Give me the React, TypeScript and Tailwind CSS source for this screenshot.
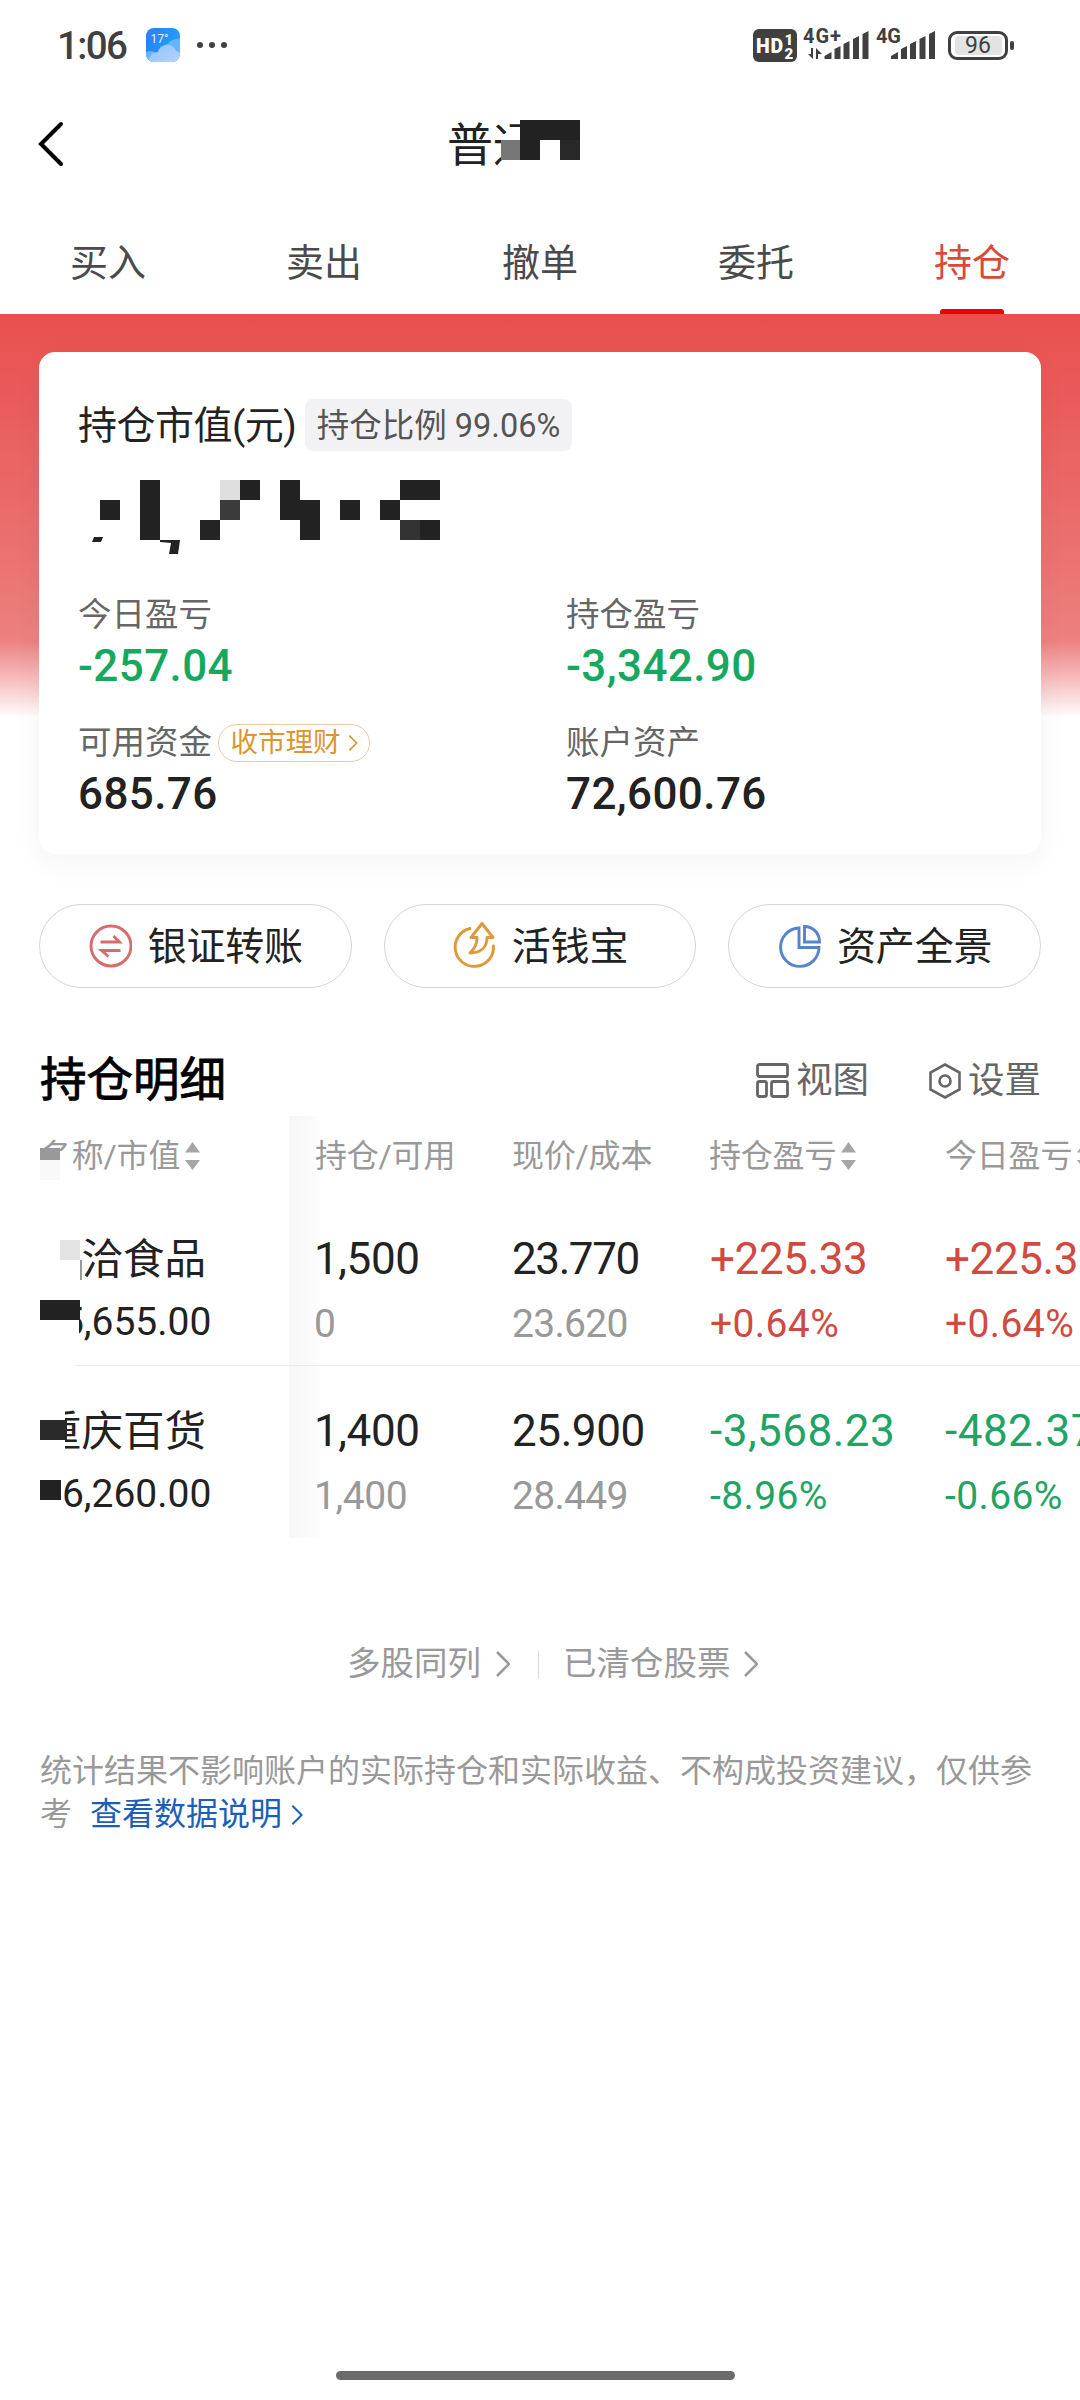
import type { ReactNode } from 'react'
import clsx from 'clsx'

const tabs = ['买入', '卖出', '撤单', '委托', '持仓']

const holdings = [
  {
    name: '洽洽食品',
    value: '35,655.00',
    amount: '1,500',
    available: '0',
    price: '23.770',
    cost: '23.620',
    profit: '+225.33',
    profitRate: '+0.64%',
    today: '+225.33',
    todayRate: '+0.64%',
    up: true
  },
  {
    name: '重庆百货',
    value: '36,260.00',
    amount: '1,400',
    available: '1,400',
    price: '25.900',
    cost: '28.449',
    profit: '-3,568.23',
    profitRate: '-8.96%',
    today: '-482.37',
    todayRate: '-0.66%',
    up: false
  }
]

// Masking blocks drawn over private values: [x, y, width, height, color]
type Block = [number, number, number, number, string]

const titleMask: Block[] = [
  [54, 14, 80, 32, '#ffffff'],
  [61, 8, 20, 14, '#ffffff'],
  [52, 20, 20, 20, '#777777'],
  [71, 0, 60, 20, '#222222'],
  [71, 20, 20, 20, '#222222'],
  [111, 20, 20, 20, '#282828']
]

const balanceMask: Block[] = [
  [20, 20, 20, 20, '#222222'],
  [60, 0, 20, 60, '#222222'],
  [140, 0, 20, 20, '#dfdfdf'],
  [160, 0, 20, 20, '#222222'],
  [140, 20, 20, 20, '#3b3b3b'],
  [120, 40, 20, 20, '#242424'],
  [200, 0, 20, 40, '#222222'],
  [220, 20, 20, 40, '#222222'],
  [260, 20, 20, 20, '#222222'],
  [300, 20, 20, 20, '#222222'],
  [320, 0, 40, 20, '#222222'],
  [320, 40, 20, 20, '#333333'],
  [340, 40, 20, 20, '#222222']
]

const headMask: Block[] = [
  [0, 12, 29, 30, '#ffffff'],
  [0, 9, 20, 12, '#999999'],
  [0, 21, 20, 20, '#f9f9f9']
]

const rowMasks: Block[][] = [
  [
    [-2, 0, 44, 62, '#ffffff'],
    [20, 12, 20, 20, '#e4e4e4'],
    [40, 32, 2, 20, '#999999'],
    [-2, 70, 41, 50, '#ffffff'],
    [0, 72, 40, 20, '#222222']
  ],
  [
    [-2, 0, 27, 62, '#ffffff'],
    [0, 20, 27, 20, '#2a2a2a'],
    [-2, 70, 23, 50, '#ffffff'],
    [0, 80, 21, 20, '#222222']
  ]
]

function Mask({ blocks, className }: { blocks: Block[]; className?: string }) {
  return (
    <svg
      className={clsx('pointer-events-none absolute overflow-visible', className)}
      width="1"
      height="1"
      shapeRendering="crispEdges"
    >
      {blocks.map(([x, y, w, h, fill], i) => (
        <rect key={i} x={x} y={y} width={w} height={h} fill={fill} />
      ))}
    </svg>
  )
}

function Chevron({ className }: { className?: string }) {
  return (
    <svg className={className} viewBox="0 0 14 26" fill="none" stroke="currentColor" strokeWidth="2.6">
      <path d="M1 1l12 12L1 25" />
    </svg>
  )
}

function SortIcon() {
  return (
    <svg className="ml-[5px] h-7 w-[15px] shrink-0" viewBox="0 0 15 28" fill="#a6a6a6">
      <path d="M7.500 0L15 10.500H0zM7.500 28L15 18H0z" />
    </svg>
  )
}

function Signal({ label, data }: { label: string; data?: boolean }) {
  return (
    <svg className="h-[34px] w-[66px] overflow-visible" viewBox="0 0 66 34" fill="#404040">
      <text x="0" y="16" fontFamily="Roboto, sans-serif" fontSize="20" fontWeight="700" textLength={data ? 38 : 25}>
        {label}
      </text>
      {data && <path d="M10 21v11l-5-5h3v-6zM13 32V21l6 6h-4v5z" />}
      <g transform={data ? 'translate(21.5 0)' : 'translate(15 0)'}>
        <path d="M0 32v-3l7-4v7zM10 32V22l6-3v13zM19 32V17l6-3v18zM28.500 32V12l6-3v23zM38 32V7l6-3v28z" />
      </g>
    </svg>
  )
}

function StatusBar() {
  return (
    <div className="flex h-[90px] items-center pl-[57px] pr-[66px] text-[#404040]">
      <span className="w-[89px] pt-[3px] text-[38.500px] font-medium leading-none tracking-[-1.600px]">1:06</span>
      <svg className="h-[34px] w-[34px]" viewBox="0 0 34 34">
        <defs>
          <linearGradient id="sky" x1="0" y1="0" x2="1" y2="0.4">
            <stop offset="0" stopColor="#2f7cf6" />
            <stop offset="1" stopColor="#1ba2fb" />
          </linearGradient>
          <linearGradient id="cloud" x1="0" y1="0" x2="1" y2="1">
            <stop offset="0" stopColor="#8cc4fb" />
            <stop offset="1" stopColor="#b9d3fb" />
          </linearGradient>
          <clipPath id="tile">
            <rect width="34" height="34" rx="8" />
          </clipPath>
        </defs>
        <g clipPath="url(#tile)">
          <rect width="34" height="34" fill="url(#sky)" />
          <path d="M18 18c4-1 5-5 9-6l7-2v16H18z" fill="#63b6fb" />
          <path d="M0 24c4-2 7-1 10 1l4 9H0z" fill="#69b4fa" />
          <path d="M3 34c0-6 4-10 9-10 2-9 15-10 18-1 2 0 4 2 4 3v8z" fill="url(#cloud)" />
          <text x="4.500" y="15" fill="#e6f3ff" fontFamily="Roboto, sans-serif" fontSize="12">17°</text>
        </g>
      </svg>
      <div className="ml-[17px] flex gap-1.5">
        <i className="size-1.5 rounded-full bg-[#404040]" />
        <i className="size-1.5 rounded-full bg-[#404040]" />
        <i className="size-1.5 rounded-full bg-[#404040]" />
      </div>
      <div className="ml-auto flex items-center">
        <svg className="h-[33px] w-11" viewBox="0 0 44 33" fontFamily="Roboto, sans-serif" fontWeight="900" fill="#fff">
          <rect width="44" height="33" rx="6" fill="#404040" />
          <text x="3" y="23.500" fontSize="19.500" textLength="27">HD</text>
          <text x="31.500" y="15.500" fontSize="15">1</text>
          <text x="31.500" y="29.500" fontSize="15">2</text>
        </svg>
        <div className="ml-[6px] flex gap-[7px] pb-0.5">
          <Signal label="4G+" data />
          <Signal label="4G" />
        </div>
        <div className="ml-[6px] flex h-[29px] w-[60px] items-center justify-center rounded-[9px] border-[3px] border-[#404040]">
          <div className="flex h-[19px] w-[47px] items-center justify-center rounded-[4px] bg-[#e3e3e3] text-[23px] leading-none">
            96
          </div>
        </div>
        <i className="ml-0.5 h-[9px] w-[4px] rounded-[2px] bg-[#404040]" />
      </div>
    </div>
  )
}

function Stat({ label, value, green, extra }: { label: string; value: string; green?: boolean; extra?: ReactNode }) {
  return (
    <div className="h-32">
      <div className="flex h-[50px] items-center text-[33.500px] leading-none text-[#666666]">
        {label}
        {extra}
      </div>
      <div
        className={clsx(
          'flex h-[51px] items-center text-[44px] font-medium leading-none tracking-[0.400px]',
          green ? 'text-[#17a85f]' : 'text-[#222222]'
        )}
      >
        {value}
      </div>
    </div>
  )
}

function Pill({ icon, label }: { icon: ReactNode; label: string }) {
  return (
    <button className="flex h-[84px] items-center justify-center gap-[16px] rounded-full border border-[#d4d6d8] text-[39px] leading-none tracking-[-0.200px] text-[#222222]">
      {icon}
      <span className="pt-[2px]">{label}</span>
    </button>
  )
}

function TransferIcon() {
  return (
    <svg className="size-[44px]" viewBox="0 0 44 44" fill="none" stroke="#d66c6b" strokeWidth="2.900">
      <circle cx="23" cy="22" r="20" />
      <path d="M12.500 18h19l-6-6M32.500 26.500h-19l7 6" />
    </svg>
  )
}

function CashIcon() {
  return (
    <svg className="size-[44px] overflow-visible" viewBox="0 0 44 44" fill="none" stroke="#e0993a" strokeWidth="2.900" strokeLinejoin="round">
      <path d="M18 4.500A19.200 19.200 0 1 0 41.500 22" strokeLinecap="round" />
      <path d="M30 -0.500L19 13.500h6c0 7-2 10-7 15.500 11 0 17-6 17-15.500h6z" />
    </svg>
  )
}

function PieIcon() {
  return (
    <svg className="size-[44px]" viewBox="0 0 44 44" fill="none" stroke="#5583cc" strokeWidth="2.900">
      <path d="M22 4a19.200 19.200 0 1 0 20 19.500H22z" />
      <path d="M27.500 2.500v15.500h15C42.500 9 36 2.500 27.500 2.500z" />
    </svg>
  )
}

function Cell({ top, bottom, className, bottomClass }: { top: string; bottom: string; className: string; bottomClass?: string }) {
  return (
    <div className={clsx('shrink-0 whitespace-nowrap pt-[39px] leading-none', className)}>
      <div className="flex h-[52px] items-center text-[44px]">{top}</div>
      <div className={clsx('mt-[14px] flex h-[50px] items-center text-[39px]', bottomClass)}>{bottom}</div>
    </div>
  )
}

export default function App() {
  return (
    <div className="flex h-[2400px] w-[1080px] flex-col overflow-hidden bg-white font-[Roboto,'Noto_Sans_CJK_SC',sans-serif] text-[#222222]">
      <StatusBar />

      <header className="relative flex h-[108px] items-center">
        <svg className="ml-[38px] h-[46px] w-[26px]" viewBox="0 0 26 46" fill="none" stroke="#000" strokeWidth="4" strokeLinecap="round">
          <path d="M23 3L3 23l20 20" />
        </svg>
        <h1 className="ml-[383px] w-[92px] pt-px text-[46px] leading-none">普通</h1>
        <Mask blocks={titleMask} className="left-[449px] top-[30px]" />
      </header>

      <nav className="grid h-[116px] grid-cols-5">
        {tabs.map(tab => (
          <div
            key={tab}
            className={clsx(
              'relative flex items-center justify-center pb-2 pt-[21px] text-[38px] leading-none',
              tab === '持仓' ? 'text-[#d84a3e]' : 'text-[#4a4a4a]'
            )}
          >
            {tab}
            {tab === '持仓' && <i className="absolute bottom-0 h-[5px] w-16 rounded-t-[3px] bg-[#e60505]" />}
          </div>
        ))}
      </nav>

      <div className="bg-[linear-gradient(180deg,#e8504e_0px,#e95f5e_110px,#ea7473_256px,#ec8180_326px,#f4b5b4_360px,#fff_404px)] px-[39px] pt-[38px]">
        <section className="h-[502px] rounded-[16px] bg-white pl-[39px] pt-[47px] shadow-[0_10px_30px_rgba(0,0,0,0.045)]">
          <div className="flex h-[52px] items-center text-[39px] leading-none">
            <span className="w-[227px] whitespace-nowrap pt-[2px] tracking-[-0.500px]">持仓市值(元)</span>
            <span className="flex h-[52px] w-[267px] items-center justify-center whitespace-pre rounded-[8px] bg-[#f2f2f4] pt-[2px] text-[32.500px] text-[#555555]">
              持仓比例 99.06%
            </span>
          </div>
          <div className="relative h-[139px]">
            <Mask blocks={balanceMask} className="left-[2px] top-[29px]" />
            {/* Bottom edges of the masked digits */}
            <svg className="absolute left-3.5 top-[85px] h-5 w-[90px]" viewBox="0 0 90 20" fill="#222222">
              <path d="M2 1h9l-2 5H0zM68 4h20l-2 14h-9l2-11-11-1z" />
            </svg>
          </div>
          <div className="grid grid-cols-[488px_1fr]">
            <Stat label="今日盈亏" value="-257.04" green />
            <Stat label="持仓盈亏" value="-3,342.90" green />
            <Stat
              label="可用资金"
              value="685.76"
              extra={
                <span className="ml-[6px] flex h-[38px] w-[152px] items-center justify-center gap-[7px] rounded-full border-[1.500px] border-[#e8cba8] text-[27.500px] text-[#de9430]">
                  收市理财
                  <Chevron className="h-[16px] w-[10px]" />
                </span>
              }
            />
            <Stat label="账户资产" value="72,600.76" />
          </div>
        </section>
      </div>

      <div className="mt-[50px] grid grid-cols-3 gap-8 px-[39px]">
        <Pill icon={<TransferIcon />} label="银证转账" />
        <Pill icon={<CashIcon />} label="活钱宝" />
        <Pill icon={<PieIcon />} label="资产全景" />
      </div>

      <div className="mt-[57px] flex h-[71px] items-center pl-10 pr-[39px] text-[#666666]">
        <h2 className="text-[46.500px] leading-none text-black [-webkit-text-stroke:0.900px_#000]">持仓明细</h2>
        <div className="ml-auto flex items-center text-[36.500px] leading-none">
          <svg className="mr-[7px] h-[35px] w-[33px]" viewBox="0 0 33 35" fill="none" stroke="currentColor" strokeWidth="2.800">
            <rect x="1.500" y="1.500" width="30" height="12" rx="2" />
            <rect x="1.500" y="18.500" width="9" height="15" rx="2" />
            <rect x="15.500" y="18.500" width="16" height="15" rx="2" />
          </svg>
          <span className="pt-px">视图</span>
          <svg className="ml-[60px] mr-[7px] h-9 w-8" viewBox="0 0 32 36" fill="none" stroke="currentColor" strokeWidth="2.600">
            <path d="M16 1.500l14.500 8v17L16 34.500l-14.500-8v-17z" />
            <circle cx="16" cy="18" r="5.500" />
          </svg>
          <span className="pt-px">设置</span>
        </div>
      </div>

      <div className="flex h-[422px]">
        <div className="w-[289px] shrink-0 pl-10">
          <div className="relative flex h-[78px] items-center whitespace-nowrap pt-[2px] text-[32px] leading-none tracking-[-0.200px] text-[#999999]">
            名称/市值
            <SortIcon />
            <Mask blocks={headMask} className="left-0 top-[23px]" />
          </div>
          {holdings.map((h, i) => (
            <div key={h.name} className="relative h-[172px] whitespace-nowrap pt-[40px] leading-none">
              <div className="flex h-[52px] items-center text-[41.500px]">{h.name}</div>
              <div className="mt-[11px] flex h-[50px] items-center text-[39px]">{h.value}</div>
              {i === 0 && <i className="absolute bottom-0 left-[35px] right-0 h-px bg-[#ececec]" />}
              <Mask blocks={rowMasks[i]} className="left-0 top-[34px]" />
            </div>
          ))}
        </div>

        <div className="flex-1 overflow-hidden bg-[linear-gradient(90deg,#f7f7f7_0px,#fafafa_20px,#fff_34px)]">
          <div className="flex h-[78px] items-center whitespace-nowrap pl-[26px] pt-[2px] text-[32px] leading-none tracking-[-0.200px] text-[#999999]">
            <span className="w-[197px] shrink-0">持仓/可用</span>
            <span className="w-[197px] shrink-0">现价/成本</span>
            <span className="flex w-[236px] shrink-0 items-center">持仓盈亏<SortIcon /></span>
            <span className="flex shrink-0 items-center">今日盈亏<SortIcon /></span>
          </div>
          {holdings.map((h, i) => (
            <div key={h.name} className={clsx('flex h-[172px] pl-[25px]', i === 0 && 'border-b border-[#ececec]')}>
              <Cell className="w-[198px] tracking-[-0.400px]" top={h.amount} bottom={h.available} bottomClass="text-[#999999]" />
              <Cell
                className={clsx('w-[198px]', h.up ? 'tracking-[-1.400px]' : 'tracking-[-0.400px]')}
                top={h.price}
                bottom={h.cost}
                bottomClass="text-[#999999] tracking-[-0.700px]"
              />
              <Cell
                className={clsx('w-[235px]', h.up ? 'tracking-[-0.400px] text-[#d04a3f]' : 'tracking-[0.500px] text-[#1fa463]')}
                top={h.profit}
                bottom={h.profitRate}
                bottomClass="tracking-[0.400px]"
              />
              <Cell
                className={clsx('w-[235px]', h.up ? 'tracking-[-0.400px] text-[#d04a3f]' : 'tracking-[0.500px] text-[#1fa463]')}
                top={h.today}
                bottom={h.todayRate}
                bottomClass="tracking-[0.400px]"
              />
            </div>
          ))}
        </div>
      </div>

      <div className="mt-[106px] flex h-10 items-center pl-[347px] text-[33.500px] leading-none text-[#999999]">
        多股同列
        <Chevron className="ml-[15px] h-[26px] w-[14px]" />
        <i className="ml-7 mr-[24px] h-[29px] w-px bg-[#dddddd]" />
        已清仓股票
        <Chevron className="ml-[13px] h-[26px] w-[14px]" />
      </div>

      <div className="mt-[66px] whitespace-nowrap pl-[40px] text-[32px] leading-[43px] text-[#999999]">
        <p>统计结果不影响账户的实际持仓和实际收益、不构成投资建议，仅供参</p>
        <p className="flex items-center">
          考
          <a className="ml-[18px] flex items-center text-[#1c5fb8]">
            查看数据说明
            <Chevron className="ml-[9px] h-[20px] w-[12px]" />
          </a>
        </p>
      </div>

      <div className="mb-5 ml-[336px] mt-auto h-[9px] w-[399px] rounded-full bg-[#6b6b6b]" />
    </div>
  )
}
